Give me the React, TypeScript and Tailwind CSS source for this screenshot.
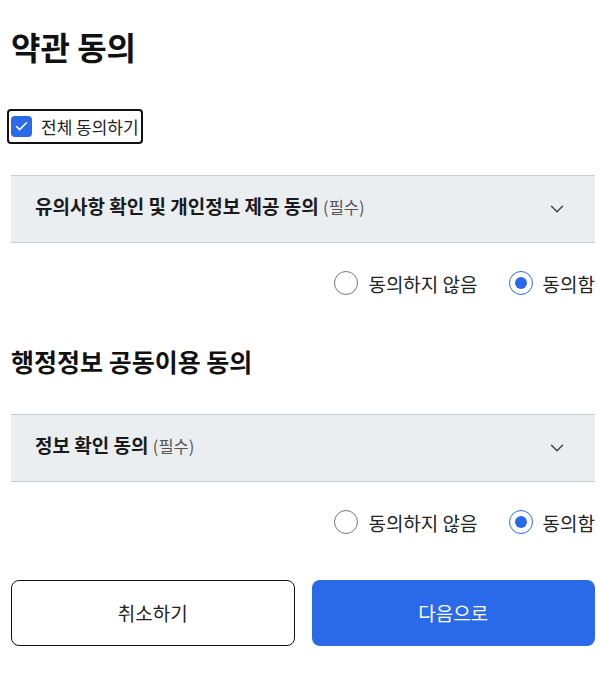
import { ChevronDown, Check } from "lucide-react";

const font = { fontFamily: '"Noto Sans CJK KR", "Noto Sans", sans-serif' };

const AgreeRadios = ({ name }: { name: string }) => (
  <div className="flex items-center justify-end gap-[31px] h-[80px]">
    <label className="flex items-center gap-[10px] cursor-pointer">
      <span className="w-[24px] h-[24px] rounded-full border border-[#767676] bg-white" />
      <span className="text-[19px] text-[#222] leading-none">동의하지 않음</span>
    </label>
    <label className="flex items-center gap-[10px] cursor-pointer">
      <span className="w-[24px] h-[24px] rounded-full border border-[#2a6ae9] flex items-center justify-center">
        <span className="w-[12px] h-[12px] rounded-full bg-[#2a6ae9]" />
      </span>
      <span className="text-[19px] text-[#222] leading-none" data-name={name}>동의함</span>
    </label>
  </div>
);

const Accordion = ({ title }: { title: string }) => (
  <div className="flex items-center justify-between h-[68px] bg-[#ebeef1] border-y border-[#c9ccd0] pl-[24px] pr-[27px]">
    <p className="text-[19px] font-bold text-[#1a1a1a] leading-[28px] mb-[5px]">
      {title} <span className="text-[16.5px] font-normal text-[#555]">(필수)</span>
    </p>
    <ChevronDown className="w-[22px] h-[22px] text-[#444]" strokeWidth={1.6} />
  </div>
);

export default function App() {
  return (
    <div className="bg-white w-[602px] min-h-[678px] pl-[11px] pr-[7px] pt-[24px]" style={font}>
      <h1 className="text-[32px] font-bold text-[#111] leading-[44px]">약관 동의</h1>

      <div className="mt-[41px] -ml-[4px] inline-flex items-center gap-[9px] border-2 border-[#111] rounded-[4px] h-[35px] pl-[2px] pr-[2px]">
        <span className="w-[21px] h-[21px] rounded-[4px] bg-[#2a6ae9] flex items-center justify-center">
          <Check className="w-[15px] h-[15px] text-white" strokeWidth={2.5} />
        </span>
        <span className="text-[17px] text-[#222]">전체 동의하기</span>
      </div>

      <div className="mt-[31px]">
        <Accordion title="유의사항 확인 및 개인정보 제공 동의" />
        <AgreeRadios name="first" />
      </div>

      <h2 className="mt-[20px] text-[25px] font-bold text-[#111] leading-[36px]">행정정보 공동이용 동의</h2>

      <div className="mt-[35px]">
        <Accordion title="정보 확인 동의" />
        <AgreeRadios name="second" />
      </div>

      <div className="mt-[18px] grid grid-cols-2 gap-[17px]">
        <button className="h-[66px] rounded-[8px] border border-[#111] bg-white text-[19px] text-[#222]">취소하기</button>
        <button className="h-[66px] rounded-[8px] bg-[#2a6ae9] text-[19px] text-white">다음으로</button>
      </div>
    </div>
  );
}
